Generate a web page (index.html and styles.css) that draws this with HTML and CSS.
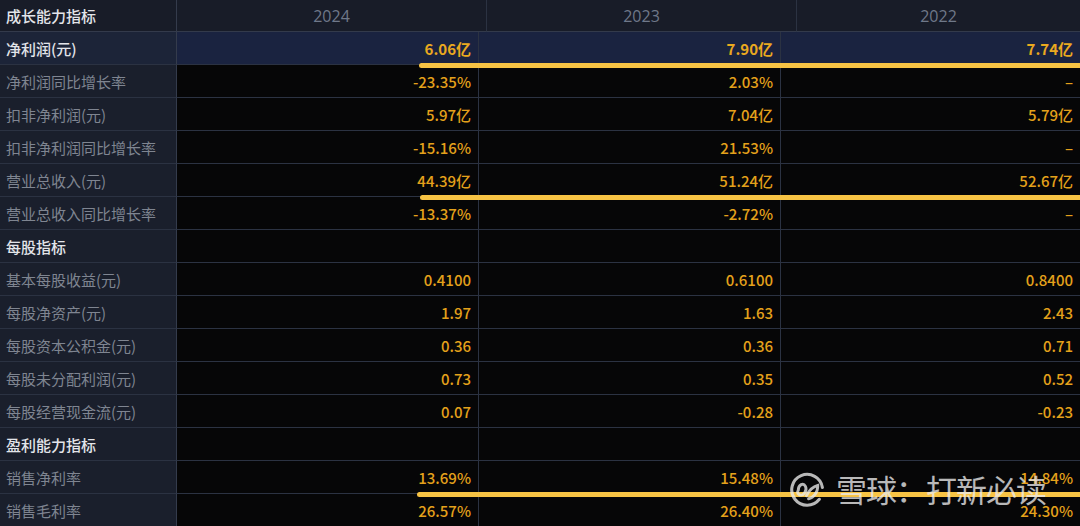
FILE: index.html
```html
<!DOCTYPE html>
<html lang="zh-CN">
<head>
<meta charset="utf-8">
<title>成长能力指标</title>
<link rel="stylesheet" href="styles.css">
</head>
<body>
<div class="page">
  <div class="table">
    <div class="row hdr">
      <div class="cell label title">成长能力指标</div>
      <div class="cell year">2024</div>
      <div class="cell year">2023</div>
      <div class="cell year">2022</div>
    </div>
    <div class="row hl">
      <div class="cell label title">净利润(元)</div>
      <div class="cell val strong">6.06亿</div>
      <div class="cell val strong">7.90亿</div>
      <div class="cell val strong">7.74亿</div>
      <span class="mark m1"></span>
    </div>
    <div class="row">
      <div class="cell label">净利润同比增长率</div>
      <div class="cell val">-23.35%</div>
      <div class="cell val">2.03%</div>
      <div class="cell val">–</div>
    </div>
    <div class="row">
      <div class="cell label">扣非净利润(元)</div>
      <div class="cell val">5.97亿</div>
      <div class="cell val">7.04亿</div>
      <div class="cell val">5.79亿</div>
    </div>
    <div class="row">
      <div class="cell label">扣非净利润同比增长率</div>
      <div class="cell val">-15.16%</div>
      <div class="cell val">21.53%</div>
      <div class="cell val">–</div>
    </div>
    <div class="row">
      <div class="cell label">营业总收入(元)</div>
      <div class="cell val">44.39亿</div>
      <div class="cell val">51.24亿</div>
      <div class="cell val">52.67亿</div>
      <span class="mark m2"></span>
    </div>
    <div class="row">
      <div class="cell label">营业总收入同比增长率</div>
      <div class="cell val">-13.37%</div>
      <div class="cell val">-2.72%</div>
      <div class="cell val">–</div>
    </div>
    <div class="row">
      <div class="cell label title">每股指标</div>
      <div class="cell val"></div>
      <div class="cell val"></div>
      <div class="cell val"></div>
    </div>
    <div class="row">
      <div class="cell label">基本每股收益(元)</div>
      <div class="cell val">0.4100</div>
      <div class="cell val">0.6100</div>
      <div class="cell val">0.8400</div>
    </div>
    <div class="row">
      <div class="cell label">每股净资产(元)</div>
      <div class="cell val">1.97</div>
      <div class="cell val">1.63</div>
      <div class="cell val">2.43</div>
    </div>
    <div class="row">
      <div class="cell label">每股资本公积金(元)</div>
      <div class="cell val">0.36</div>
      <div class="cell val">0.36</div>
      <div class="cell val">0.71</div>
    </div>
    <div class="row">
      <div class="cell label">每股未分配利润(元)</div>
      <div class="cell val">0.73</div>
      <div class="cell val">0.35</div>
      <div class="cell val">0.52</div>
    </div>
    <div class="row">
      <div class="cell label">每股经营现金流(元)</div>
      <div class="cell val">0.07</div>
      <div class="cell val">-0.28</div>
      <div class="cell val">-0.23</div>
    </div>
    <div class="row">
      <div class="cell label title">盈利能力指标</div>
      <div class="cell val"></div>
      <div class="cell val"></div>
      <div class="cell val"></div>
    </div>
    <div class="row">
      <div class="cell label">销售净利率</div>
      <div class="cell val">13.69%</div>
      <div class="cell val">15.48%</div>
      <div class="cell val">14.84%</div>
      <span class="mark m3"></span>
    </div>
    <div class="row">
      <div class="cell label">销售毛利率</div>
      <div class="cell val">26.57%</div>
      <div class="cell val">26.40%</div>
      <div class="cell val">24.30%</div>
    </div>
  </div>
  <div class="watermark">
    <svg class="wm-logo" viewBox="0 0 36 36" width="37" height="37" aria-hidden="true">
      <path d="M29.5 27.5 A15 15 0 1 1 32.5 16" fill="none" stroke="currentColor" stroke-width="3" stroke-linecap="round"/>
      <path d="M9 19 C9 13 14 11 16 15 C18 19 14 25 10 23 C8 22 8 20 9 19 Z" fill="none" stroke="currentColor" stroke-width="2.8" stroke-linejoin="round"/>
      <path d="M17 24 C20 18 24 15 28 14 C28 21 24 26 19 27" fill="none" stroke="currentColor" stroke-width="2.8" stroke-linecap="round"/>
    </svg>
    <span class="wm-text">雪球：打新必读</span>
  </div>
</div>
</body>
</html>
```
FILE: styles.css
```css
html, body {
  margin: 0;
  padding: 0;
  background: #060607;
}
.page {
  position: relative;
  width: 1080px;
  height: 526px;
  overflow: hidden;
  font-family: "Noto Sans CJK SC", "Noto Sans", sans-serif;
}
.table {
  display: flex;
  flex-direction: column;
}
.row {
  position: relative;
  display: grid;
  grid-template-columns: 177px 302px 302px 1fr;
  height: 33px;
}
.row.hdr {
  grid-template-columns: 177px 310px 310px 1fr;
  height: 32px;
}
.cell {
  display: flex;
  align-items: center;
  border-right: 1px solid #2b3242;
  border-bottom: 1px solid #2b3242;
  box-sizing: border-box;
  font-size: 15px;
  white-space: nowrap;
}
.cell:last-of-type {
  border-right: none;
}
.label {
  background: #1a1f2c;
  color: #7f8591;
  padding-left: 6px;
  border-right-color: #343b4c;
}
.label.title {
  color: #e3e5ea;
  font-weight: 500;
}
.hdr .cell {
  background: #181c28;
  border-bottom-color: #333a4b;
}
.year {
  justify-content: center;
  color: #6f7889;
  font-family: "Open Sans", "Noto Sans", sans-serif;
  font-size: 16px;
  font-weight: 500;
}
.val {
  justify-content: flex-end;
  padding-right: 7px;
  color: #e4a11b;
  background: #060607;
  font-weight: 500;
}
.row.hl .cell {
  background: #1a2340;
}
.row.hl .label {
  background: #1c2438;
}
.val.strong {
  font-weight: 700;
  color: #eaa91f;
}
.mark {
  position: absolute;
  right: 0;
  height: 5px;
  background: #f7c344;
  border-radius: 3px 0 0 3px;
  z-index: 2;
}
.m1 { left: 419px; bottom: -3px; }
.m2 { left: 420px; bottom: -3px; }
.m3 { left: 417px; bottom: -3px; }
.watermark {
  position: absolute;
  left: 789px;
  top: 469px;
  display: flex;
  align-items: center;
  gap: 10px;
  color: rgba(235, 235, 235, 0.78);
  z-index: 3;
}
.wm-logo {
  display: block;
}
.wm-text {
  font-family: "Noto Sans CJK SC", sans-serif;
  font-size: 31px;
  font-weight: 400;
  letter-spacing: -1px;
  line-height: 40px;
}
```
